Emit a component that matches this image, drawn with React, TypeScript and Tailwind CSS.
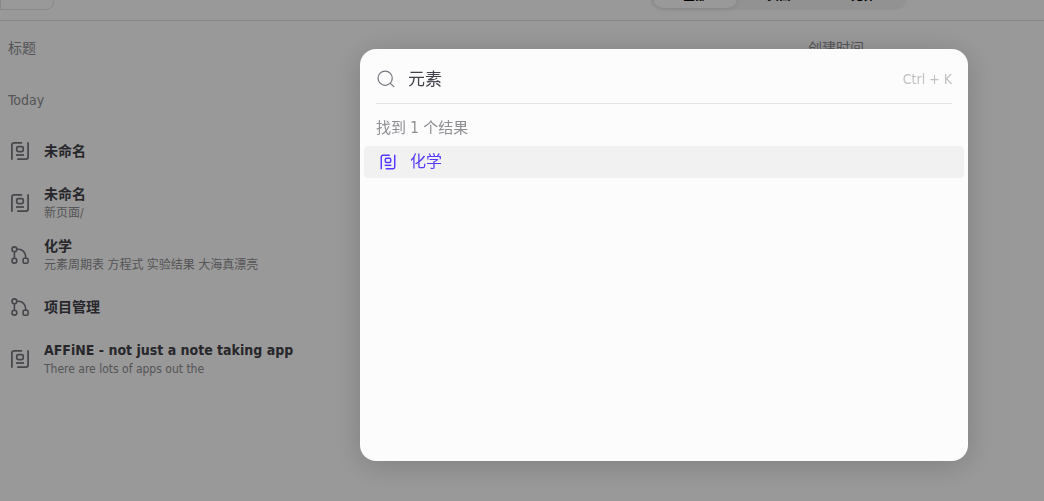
import { useState } from "react";

type Kind = "page" | "edgeless";

interface Doc {
  kind: Kind;
  title: string;
  preview?: string;
}

const docs: Doc[] = [
  { kind: "page", title: "未命名" },
  { kind: "page", title: "未命名", preview: "新页面/" },
  { kind: "edgeless", title: "化学", preview: "元素周期表 方程式 实验结果 大海真漂亮" },
  { kind: "edgeless", title: "项目管理" },
  { kind: "page", title: "AFFiNE - not just a note taking app", preview: "There are lots of apps out the" },
];

function PageIcon({ className }: { className: string }) {
  return (
    <svg viewBox="0 0 24 24" fill="none" stroke="currentColor" strokeWidth="1.75" className={className} aria-hidden="true">
      <path d="M3.9 20.8V5.9a2 2 0 0 1 2-2h8.2" />
      <path d="M20.1 3.2v14.9a2 2 0 0 1-2 2H9.2" />
      <rect x="8.75" y="7.5" width="6.5" height="5" rx="1.5" />
      <path d="M8 16h8" />
    </svg>
  );
}

function EdgelessIcon({ className }: { className: string }) {
  return (
    <svg viewBox="0 0 24 24" fill="none" stroke="currentColor" strokeWidth="1.6" strokeLinecap="round" className={className} aria-hidden="true">
      <circle cx="6.4" cy="6.3" r="2.4" />
      <circle cx="6.4" cy="17.7" r="2.4" />
      <rect x="15.1" y="15.2" width="5" height="5" rx="1.2" />
      <path d="M6.4 8.8v6.4M8.9 6.3h1.7a7 7 0 0 1 7 7v1.9" />
    </svg>
  );
}

function SearchIcon({ className }: { className: string }) {
  return (
    <svg viewBox="0 0 24 24" fill="none" stroke="currentColor" strokeWidth="1.5" strokeLinecap="round" className={className} aria-hidden="true">
      <circle cx="11" cy="11" r="8.5" />
      <path d="M17.2 17.2l4.2 4" />
    </svg>
  );
}

function TopBar() {
  return (
    <header className="flex h-[21px] items-end overflow-hidden border-b border-[#e3e2e4]">
      <div className="mb-2.5 h-8 w-[54px] shrink-0 rounded-r-lg border border-[#e3e2e4]" />
      <div className="ml-[597px] mb-2.5 flex shrink-0 rounded-xl bg-[#f4f4f5] p-0.5 text-xs font-semibold text-black">
        <button className="h-6 w-[84px] rounded-[10px] bg-white shadow-[0_0_6px_rgba(0,0,0,0.12)]">全部</button>
        <button className="h-6 w-[84px]">页面</button>
        <button className="h-6 w-[84px]">无界</button>
      </div>
    </header>
  );
}

function DocTable() {
  return (
    <table className="w-full table-fixed text-left">
      <thead>
        <tr className="h-[52px] text-sm text-[#8e8d91]">
          <th className="w-[800px] pt-0.5 pl-2 font-normal">标题</th>
          <th className="pt-0.5 pl-2 font-normal">创建时间</th>
        </tr>
      </thead>
      <tbody>
        <tr className="h-[52px] text-sm text-[#8e8d91]">
          <td className="pt-0.5 pl-2" colSpan={2}>Today</td>
        </tr>
        {docs.map((doc, i) => (
          <tr key={i} className="h-[52px]">
            <td className="pl-2" colSpan={2}>
              <div className="flex items-center gap-3">
                {doc.kind === "page" ? (
                  <PageIcon className="size-6 shrink-0 text-[#77757d]" />
                ) : (
                  <EdgelessIcon className="size-6 shrink-0 text-[#77757d]" />
                )}
                <div>
                  <div className="text-sm leading-5 font-semibold text-[#424149]">{doc.title}</div>
                  {doc.preview && <div className="text-xs leading-[18px] text-[#8e8d91]">{doc.preview}</div>}
                </div>
              </div>
            </td>
          </tr>
        ))}
      </tbody>
    </table>
  );
}

function QuickSearch() {
  const [query, setQuery] = useState("元素");
  return (
    <div className="fixed inset-0 flex items-start justify-end bg-black/40 pt-[49px] pr-[76px]">
      <div role="dialog" aria-label="搜索" className="min-h-[412px] w-[608px] rounded-2xl bg-[#fcfcfd] shadow-[0_4px_30px_rgba(0,0,0,0.18)]">
        <div className="mx-4 flex h-[55px] items-center gap-3 border-b border-[#e3e2e4] pt-1.5">
          <SearchIcon className="size-5 shrink-0 text-[#77757d]" />
          <input
            aria-label="搜索"
            value={query}
            onChange={(e) => setQuery(e.target.value)}
            className="min-w-0 flex-1 bg-transparent text-[17px] leading-6 text-[#424149] outline-none"
          />
          <kbd className="font-[inherit] text-sm text-[#c0bfc1]">Ctrl + K</kbd>
        </div>
        <p className="px-4 pt-3.5 pb-2 text-[15px] leading-5 text-[#8e8d91]">找到 1 个结果</p>
        <ul className="px-1">
          <li>
            <a href="#chemistry" className="flex h-8 items-center gap-3 rounded bg-[#f1f1f1] px-3.5 text-base text-[#5438ff]">
              <PageIcon className="size-5 shrink-0" />
              化学
            </a>
          </li>
        </ul>
      </div>
    </div>
  );
}

export default function App() {
  return (
    <div className="min-h-screen bg-white font-['DejaVu_Sans_Condensed','Noto_Sans_CJK_SC',sans-serif]">
      <TopBar />
      <DocTable />
      <QuickSearch />
    </div>
  );
}
